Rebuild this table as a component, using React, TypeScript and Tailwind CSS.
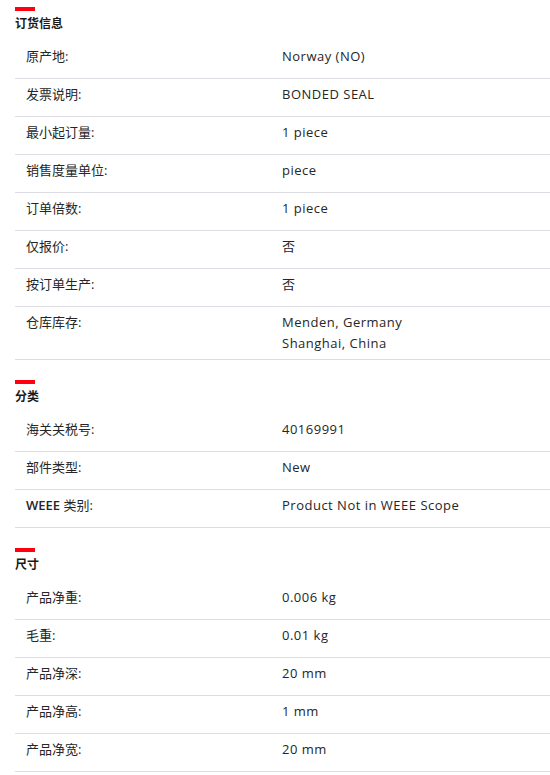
import React from 'react';

interface Row {
    label: React.ReactNode;
    value: string[];
}

interface Section {
    title: string;
    rows: Row[];
}

const sections: Section[] = [
    {
        title: "订货信息",
        rows: [
            { label: "原产地:", value: ["Norway (NO)"] },
            { label: "发票说明:", value: ["BONDED SEAL"] },
            { label: "最小起订量:", value: ["1 piece"] },
            { label: "销售度量单位:", value: ["piece"] },
            { label: "订单倍数:", value: ["1 piece"] },
            { label: "仅报价:", value: ["否"] },
            { label: "按订单生产:", value: ["否"] },
            { label: "仓库库存:", value: ["Menden, Germany", "Shanghai, China"] },
        ],
    },
    {
        title: "分类",
        rows: [
            { label: "海关关税号:", value: ["40169991"] },
            { label: "部件类型:", value: ["New"] },
            { label: <><span className="font-semibold">WEEE</span> 类别:</>, value: ["Product Not in WEEE Scope"] },
        ],
    },
    {
        title: "尺寸",
        rows: [
            { label: "产品净重:", value: ["0.006 kg"] },
            { label: "毛重:", value: ["0.01 kg"] },
            { label: "产品净深:", value: ["20 mm"] },
            { label: "产品净高:", value: ["1 mm"] },
            { label: "产品净宽:", value: ["20 mm"] },
        ],
    },
];

const App: React.FC = () => {
    return (
        <div
            className="w-[550px] min-h-[775px] bg-white pl-[15px] pt-[7px] text-[#262626]"
            style={{ fontFamily: '"Open Sans", "Noto Sans CJK SC", sans-serif' }}
        >
            {sections.map((section, i) => (
                <div key={i} className={i > 0 ? 'mt-[20px]' : ''}>
                    {/* Section header */}
                    <div className="w-[20px] h-[4px] bg-[#ff000f]"></div>
                    <h3 className="mt-[4px] mb-[9px] h-[17px] text-[12px] leading-[17px] font-semibold text-[#1a1a1a]">
                        {section.title}
                    </h3>

                    {/* Rows */}
                    {section.rows.map((row, j) => (
                        <div
                            key={j}
                            className="grid grid-cols-[256px_1fr] items-start border-b border-[#dcdce2] py-[5px] text-[13px] leading-[21px]"
                        >
                            <div className="pl-[11px] h-[27px] whitespace-nowrap">{row.label}</div>
                            <div className="pl-[11px] tracking-[0.5px]">
                                {row.value.map((v, k) => (
                                    <div key={k} className="h-[21px]">{v}</div>
                                ))}
                            </div>
                        </div>
                    ))}
                </div>
            ))}
        </div>
    );
};

export default App;
